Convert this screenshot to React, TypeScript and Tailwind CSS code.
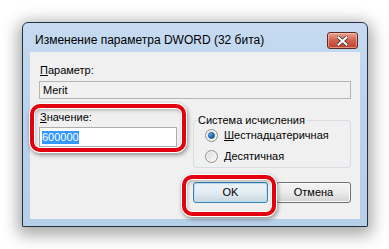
import React from "react";

const dlgFont = { fontFamily: '"Liberation Sans", Arial, sans-serif' };

function Radio({ checked }: { checked?: boolean }) {
  return (
    <span className="flex h-[13px] w-[13px] items-center justify-center rounded-full border border-[#8e8f8f] bg-gradient-to-br from-[#dcdcdc] to-[#fbfbfb] shadow-[inset_0_0_0_1px_#f4f4f4]">
      {checked && (
        <span className="h-[7px] w-[7px] rounded-full border border-[#1f4e86] bg-gradient-to-br from-[#8cd0fb] via-[#1f7ccc] to-[#0e4c96]" />
      )}
    </span>
  );
}

function WinButton({ label, isDefault }: { label: string; isDefault?: boolean }) {
  return (
    <div
      className={
        isDefault
          ? "flex h-[21px] w-[75px] items-center justify-center rounded-[3px] border border-[#3c7fb1] bg-gradient-to-b from-[#eef4f8] via-[#e3ecf2] to-[#c8d6df] text-[11px] text-black shadow-[inset_0_0_0_1px_#b8e0f6]"
          : "flex h-[21px] w-[75px] items-center justify-center rounded-[3px] border border-[#707070] bg-gradient-to-b from-[#f4f4f4] via-[#ebebeb] to-[#d2d2d2] text-[11px] text-black shadow-[inset_0_0_0_1px_#fcfcfc]"
      }
    >
      {label}
    </div>
  );
}

export default function App() {
  return (
    <div className="relative h-[249px] w-[389px] overflow-hidden bg-white pl-[22px] pt-[22px]" style={dlgFont}>
      <div className="flex h-[205px] w-[346px] flex-col rounded-t-[6px] rounded-b-[1px] border border-[#23303f] bg-gradient-to-b from-[#c6dbf1] via-[#b9d1ea] to-[#b7d0ea] px-[7px] pb-[7px] shadow-[0_4px_16px_4px_rgba(0,0,0,0.35)]">
        {/* title bar */}
        <div className="flex h-[29px] items-start justify-between pl-[5px] pr-[2px]">
          <span className="mt-[10px] text-[12px] leading-[15px] text-black">
            Изменение параметра DWORD (32 бита)
          </span>
          <div className="mt-[9px] flex h-[17px] w-[31px] items-center justify-center rounded-[3px] border border-[#5b2a22] bg-gradient-to-b from-[#e8a493] via-[#d0614b] to-[#c1402c] shadow-[inset_0_0_0_1px_rgba(255,220,210,0.5)]">
            <svg width="11" height="10" viewBox="0 0 11 10">
              <path
                d="M1.5 1.5 L9.5 8.5 M9.5 1.5 L1.5 8.5"
                stroke="#3a3a3a"
                strokeWidth="3.6"
                strokeLinecap="square"
              />
              <path
                d="M1.5 1.5 L9.5 8.5 M9.5 1.5 L1.5 8.5"
                stroke="#ffffff"
                strokeWidth="2"
                strokeLinecap="square"
              />
            </svg>
          </div>
        </div>

        {/* client area */}
        <div className="flex flex-1 flex-col bg-[#f0f0f0] px-[9px] text-[11px] leading-[13px] text-black">
          <div className="mt-[12px] pl-[1px]">
            <span className="underline">П</span>араметр:
          </div>
          <div className="mt-[4px] flex h-[18px] items-center border border-[#b5b5b5] bg-[#f0f0f0] pl-[3px]">
            Merit
          </div>

          <div className="flex">
            <div className="flex w-[138px] flex-col">
              <div className="mt-[12px] pl-[1px]">
                <span className="underline">З</span>начение:
              </div>
              <div className="mt-[3px] flex h-[20px] items-center border border-[#abadb3] bg-white pl-[2px]">
                <span className="bg-[#3399ff] text-white">600000</span>
              </div>
            </div>

            <fieldset className="ml-[16px] mt-[15px] h-[54px] flex-1 rounded-[3px] border border-[#d5dfe5] px-0 pt-[2px]">
              <legend className="ml-[3px] px-[1px]">Система исчисления</legend>
              <div className="ml-[11px] flex items-center gap-[6px]">
                <Radio checked />
                <span>
                  <span className="underline">Ш</span>естнадцатеричная
                </span>
              </div>
              <div className="ml-[11px] mt-[8px] flex items-center gap-[6px]">
                <Radio />
                <span>
                  <span className="underline">Д</span>есятичная
                </span>
              </div>
            </fieldset>
          </div>

          <div className="mt-[14px] flex justify-end gap-[8px]">
            <WinButton label="OK" isDefault />
            <WinButton label="Отмена" />
          </div>
        </div>
      </div>

      {/* red highlight markers */}
      <div className="absolute left-[30px] top-[104px] h-[48px] w-[156px] rounded-[10px] border-[4px] border-[#e3000f] shadow-[0_0_0_1px_#fff,inset_0_0_0_1px_#fff,1px_2px_4px_1px_rgba(0,0,0,0.4),inset_1px_2px_4px_rgba(0,0,0,0.3)]" />
      <div className="absolute left-[182px] top-[175px] h-[41px] w-[94px] rounded-[10px] border-[4px] border-[#e3000f] shadow-[0_0_0_1px_#fff,inset_0_0_0_1px_#fff,1px_2px_4px_1px_rgba(0,0,0,0.4),inset_1px_2px_4px_rgba(0,0,0,0.3)]" />
    </div>
  );
}
